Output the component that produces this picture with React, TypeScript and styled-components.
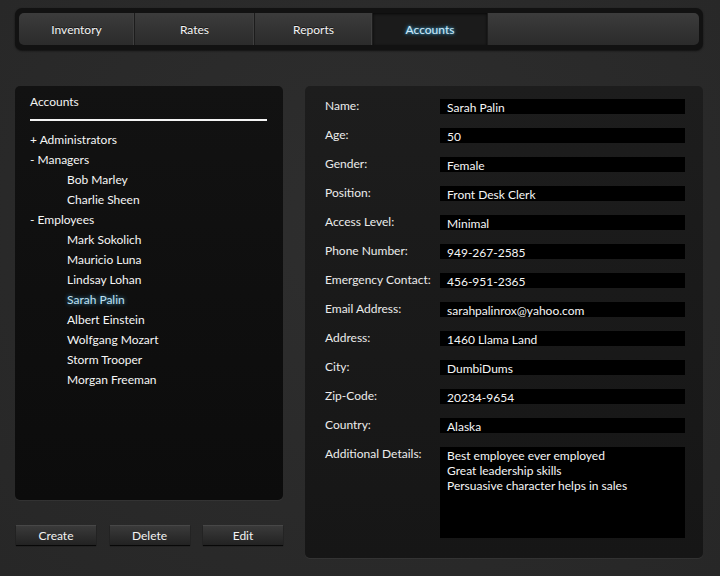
import React from "react";
import styled, { createGlobalStyle } from "styled-components";

const GlobalStyle = createGlobalStyle`
    html, body {
        margin: 0;
        padding: 0;
        background: #2a2a2a;
    }
    body {
        font-family: Lato, "Open Sans", sans-serif;
        color: #f2f2f2;
    }
`;

const Page = styled.div`
    width: 720px;
    height: 576px;
    box-sizing: border-box;
    padding: 8px 17px 0 15px;
    background: radial-gradient(circle at 50% 40%, #2e2e2e 0%, #272727 100%);
`;

const NavFrame = styled.div`
    display: flex;
    height: 42px;
    box-sizing: border-box;
    padding: 5px 4px;
    background: #121212;
    border-radius: 7px;
    box-shadow: 0 1px 2px rgba(0, 0, 0, 0.6);
`;

const NavTabs = styled.div`
    display: flex;
    flex: 1;
    border-radius: 5px;
    overflow: hidden;
    background: linear-gradient(#3c3c3c, #2b2b2b);
`;

const Tab = styled.div<{ $width?: number; $active?: boolean }>`
    width: ${(p) => (p.$width ? `${p.$width}px` : "auto")};
    flex: ${(p) => (p.$width ? "none" : "1")};
    box-sizing: border-box;
    display: flex;
    align-items: center;
    justify-content: center;
    font-size: 12px;
    color: ${(p) => (p.$active ? "#cfe9f6" : "#f4f4f4")};
    text-shadow: ${(p) =>
        p.$active ? "0 0 4px #3c9ed0, 0 0 2px #3c9ed0" : "0 -1px 0 rgba(0,0,0,0.6)"};
    background: ${(p) => (p.$active ? "#1b1b1b" : "transparent")};
    border-right: 1px solid #1c1c1c;
    box-shadow: ${(p) => (p.$active ? "inset 0 1px 3px rgba(0,0,0,0.7)" : "inset -1px 0 0 #3f3f3f")};

    &:last-child {
        border-right: none;
        box-shadow: none;
    }
`;

const Main = styled.div`
    display: flex;
    gap: 22px;
    margin-top: 36px;
`;

const LeftColumn = styled.div`
    width: 268px;
    display: flex;
    flex-direction: column;
`;

const TreePanel = styled.div`
    height: 414px;
    box-sizing: border-box;
    padding: 9px 16px 0 15px;
    background: linear-gradient(#121212, #0c0c0c);
    border-radius: 5px;
    box-shadow: 0 1px 1px rgba(255, 255, 255, 0.06);
`;

const TreeTitle = styled.div`
    font-size: 12px;
    line-height: 14px;
    padding-bottom: 10px;
    border-bottom: 2px solid #f4f4f4;
`;

const TreeList = styled.div`
    margin-top: 9px;
    display: flex;
    flex-direction: column;
`;

const TreeItem = styled.div<{ $child?: boolean; $selected?: boolean }>`
    font-size: 12px;
    line-height: 20px;
    padding-left: ${(p) => (p.$child ? "37px" : "0")};
    color: ${(p) => (p.$selected ? "#bfe0f2" : "#f6f6f6")};
    text-shadow: ${(p) => (p.$selected ? "0 0 4px #3a97c9" : "none")};
`;

const ButtonRow = styled.div`
    display: flex;
    justify-content: space-between;
    margin-top: 25px;
    padding-left: 1px;
`;

const Button = styled.div`
    width: 80px;
    height: 20px;
    display: flex;
    align-items: center;
    justify-content: center;
    font-size: 12px;
    background: linear-gradient(#3a3a3a, #222);
    border-top: 1px solid #474747;
    box-shadow: 0 1px 1px rgba(0, 0, 0, 0.8);
    box-sizing: border-box;
`;

const DetailPanel = styled.div`
    width: 398px;
    height: 472px;
    box-sizing: border-box;
    padding: 13px 18px 0 20px;
    background: linear-gradient(#1d1d1d, #161616);
    border-radius: 5px;
    box-shadow: 0 1px 1px rgba(255, 255, 255, 0.06);
    display: flex;
    flex-direction: column;
    gap: 14px;
`;

const Row = styled.div`
    display: flex;
    align-items: flex-start;
`;

const Label = styled.div`
    width: 115px;
    flex: none;
    font-size: 12px;
    line-height: 14px;
    color: #ececec;
`;

const Field = styled.div<{ $tall?: boolean }>`
    flex: 1;
    height: ${(p) => (p.$tall ? "91px" : "15px")};
    background: #000;
    box-sizing: border-box;
    padding: ${(p) => (p.$tall ? "1px 7px" : "1px 7px 0")};
    font-size: 12px;
    line-height: ${(p) => (p.$tall ? "15px" : "16px")};
    color: #f6f6f6;
    white-space: pre-line;
`;

const tree = [
    { text: "+ Administrators" },
    { text: "- Managers" },
    { text: "Bob Marley", child: true },
    { text: "Charlie Sheen", child: true },
    { text: "- Employees" },
    { text: "Mark Sokolich", child: true },
    { text: "Mauricio Luna", child: true },
    { text: "Lindsay Lohan", child: true },
    { text: "Sarah Palin", child: true, selected: true },
    { text: "Albert Einstein", child: true },
    { text: "Wolfgang Mozart", child: true },
    { text: "Storm Trooper", child: true },
    { text: "Morgan Freeman", child: true },
];

const fields = [
    ["Name:", "Sarah Palin"],
    ["Age:", "50"],
    ["Gender:", "Female"],
    ["Position:", "Front Desk Clerk"],
    ["Access Level:", "Minimal"],
    ["Phone Number:", "949-267-2585"],
    ["Emergency Contact:", "456-951-2365"],
    ["Email Address:", "sarahpalinrox@yahoo.com"],
    ["Address:", "1460 Llama Land"],
    ["City:", "DumbiDums"],
    ["Zip-Code:", "20234-9654"],
    ["Country:", "Alaska"],
];

export default function App() {
    return (
        <Page>
            <GlobalStyle />
            <NavFrame>
                <NavTabs>
                    <Tab $width={116}>Inventory</Tab>
                    <Tab $width={120}>Rates</Tab>
                    <Tab $width={118}>Reports</Tab>
                    <Tab $width={115} $active>Accounts</Tab>
                    <Tab />
                </NavTabs>
            </NavFrame>
            <Main>
                <LeftColumn>
                    <TreePanel>
                        <TreeTitle>Accounts</TreeTitle>
                        <TreeList>
                            {tree.map((t) => (
                                <TreeItem key={t.text} $child={t.child} $selected={t.selected}>
                                    {t.text}
                                </TreeItem>
                            ))}
                        </TreeList>
                    </TreePanel>
                    <ButtonRow>
                        <Button>Create</Button>
                        <Button>Delete</Button>
                        <Button>Edit</Button>
                    </ButtonRow>
                </LeftColumn>
                <DetailPanel>
                    {fields.map(([label, value]) => (
                        <Row key={label}>
                            <Label>{label}</Label>
                            <Field>{value}</Field>
                        </Row>
                    ))}
                    <Row>
                        <Label>Additional Details:</Label>
                        <Field $tall>
                            {"Best employee ever employed\nGreat leadership skills\nPersuasive character helps in sales"}
                        </Field>
                    </Row>
                </DetailPanel>
            </Main>
        </Page>
    );
}
